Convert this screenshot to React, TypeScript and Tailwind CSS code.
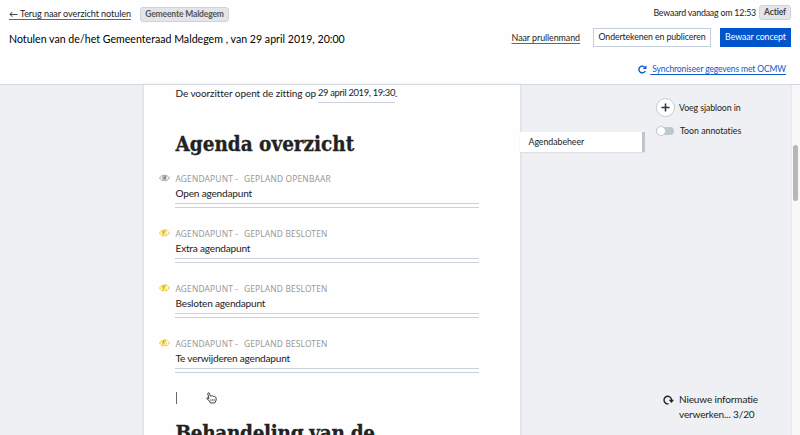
function EyeIcon() {
  return (
    <svg viewBox="0 0 20 14" className="h-[8px] w-[11px] shrink-0">
      <path d="M1 7C5 .5 15 .5 19 7C15 13.5 5 13.5 1 7Z" fill="none" stroke="#909090" strokeWidth="1.5" />
      <circle cx="10" cy="6.4" r="4" fill="#909090" />
      <path d="M8 6Q8.2 4 10 4" fill="none" stroke="#fff" strokeWidth="1" />
    </svg>
  );
}

function EyeSlashIcon() {
  return (
    <svg viewBox="0 0 20 14" className="h-[8px] w-[11px] shrink-0">
      <path d="M7 12C4.500 11 3 10 1 7C4 2.200 9 .8 13 2" fill="none" stroke="#edc60c" strokeWidth="1.800" />
      <path d="M15 3.200Q17.500 4.500 19 7C17 10.300 14 12 10 12.200" fill="none" stroke="#edc60c" strokeWidth="1.800" />
      <path d="M6 4Q8 1.500 11.500 2.200L7 11Q4.500 8 6 4Z" fill="#e3b900" />
      <path d="M14.300 5Q15 9 10.500 10.700Z" fill="#e3b900" />
      <path d="M13.500 .5L6.800 13.500" stroke="#e3b900" strokeWidth="1.500" />
    </svg>
  );
}

function HandCursor() {
  return (
    <svg viewBox="0 0 20 22" className="ml-[29px] h-[12px] w-[11px]">
      <path
        d="M5.500 12L3.200 3.500Q3 1.500 4.500 1.300Q6 1.200 6.500 3L8 7.500Q9 6 10.500 7.500Q12 6.200 13.500 8Q15 7 16.500 9Q18.500 9 18.500 11.500V15L16 20H8L6 16L1.500 12.500Q1 10 3 10.500Z"
        fill="#fff"
        stroke="#303030"
        strokeWidth="1.700"
        strokeLinejoin="round"
      />
      <path d="M9 13V16.500M12 13V16.500M15 13V16.500" stroke="#444" strokeWidth="1.300" />
    </svg>
  );
}

const items = [
  { open: true, title: "Open agendapunt" },
  { open: false, title: "Extra agendapunt" },
  { open: false, title: "Besloten agendapunt" },
  { open: false, title: "Te verwijderen agendapunt" },
];

function AgendaItem({ open, title }: { open: boolean; title: string }) {
  return (
    <div className="h-[55px]">
      <div className="-ml-[16px] flex h-[14px] items-center font-['Noto_Sans',sans-serif] text-[8.4px] text-[#999]">
        <span className="mr-[5px] flex pb-[2px]">{open ? <EyeIcon /> : <EyeSlashIcon />}</span>
        <span className="w-[69px] pl-[0.5px] tracking-[0.17px]">AGENDAPUNT -</span>
        <span className={open ? "tracking-[0.17px]" : "tracking-[0.15px]"}>{open ? "GEPLAND OPENBAAR" : "GEPLAND BESLOTEN"}</span>
      </div>
      <div className="h-[17px] pl-[0.5px] text-[10.1px] leading-[14px] tracking-[-0.2px]">{title}</div>
      <div className="h-[5px] w-[304px] border-y border-[#cbd2da]" />
    </div>
  );
}

export default function App() {
  return (
    <div className="flex h-[435px] w-[800px] flex-col overflow-hidden whitespace-nowrap bg-white font-['Lato','Noto_Sans',sans-serif] text-[#222] [font-variant-ligatures:none]">
      <header className="flex h-[85px] shrink-0 justify-between border-b border-[#d3d8df] bg-[#fefeff] pl-[9px] pr-[9px]">
        <div className="pt-[7px]">
          <div className="flex h-[15px] items-center">
            <a className="w-[131px] pb-[2px] text-[9.1px] tracking-[-0.09px] underline decoration-[#666] underline-offset-[2px]">← Terug naar overzicht notulen</a>
            <span className="flex h-[15px] w-[89px] items-center justify-center rounded-[3px] border border-[#cfd3d8] bg-[#e4e5e9] text-[8.5px] font-bold tracking-[-0.15px] text-[#555]">
              Gemeente Maldegem
            </span>
          </div>
          <h1 className="mt-[10px] text-[10.6px] leading-[15px] tracking-[0.01px] text-black">
            Notulen van de/het Gemeenteraad Maldegem , van 29 april 2019, 20:00
          </h1>
        </div>
        <div className="flex flex-col items-end pt-[5px]">
          <div className="flex h-[15px] items-center gap-[3px]">
            <span className="text-[8.8px] tracking-[-0.19px]">Bewaard vandaag om 12:53</span>
            <span className="flex h-[15px] w-[32px] items-center justify-center rounded-[3px] border border-[#cfd3d8] bg-[#e4e5e9] text-[8.5px] font-bold tracking-[-0.15px] text-[#444]">
              Actief
            </span>
          </div>
          <div className="mt-[8px] flex h-[19px] items-center">
            <a className="mr-[13px] text-[8.9px] tracking-[-0.06px] underline decoration-[#666] underline-offset-[2px]">Naar prullenmand</a>
            <button className="mr-[9px] h-[19px] w-[118px] border border-[#c5cedd] bg-white text-[8.8px] leading-none tracking-[-0.12px]">
              Ondertekenen en publiceren
            </button>
            <button className="h-[19px] w-[71px] bg-[#0055cc] text-[8.8px] leading-none tracking-[-0.08px] text-white">Bewaar concept</button>
          </div>
          <div className="mr-[5px] mt-[15px] flex h-[14px] items-center text-[#0a5ccb]">
            <svg viewBox="0 0 16 16" className="mr-[3px] h-[9px] w-[9px]">
              <path d="M13 10.500A6 6 0 1 1 11.500 3.500" fill="none" stroke="#0055cc" strokeWidth="2.400" />
              <path d="M15 .5V7H8.500Z" fill="#0055cc" />
            </svg>
            <a className="whitespace-pre text-[8.5px] tracking-[-0.12px] underline underline-offset-[2px]"> Synchroniseer gegevens met OCMW</a>
          </div>
        </div>
      </header>

      <main className="flex h-[350px] bg-[#eef0f3]">
        <article className="ml-[144px] h-[350px] w-[376px] overflow-hidden bg-[#fefefe] pl-[31px] shadow-[0_0_2px_1px_#d8dce2]">
          <p className="flex h-[18px] pl-[0.5px] text-[10px] leading-[16px]">
            <span className="w-[142.5px] tracking-[-0.08px]">De voorzitter opent de zitting op</span>
            <span className="w-[77px] border-b border-[#cbd2da] text-[9.4px] leading-[16.500px] tracking-[-0.34px]">29 april 2019, 19:30</span>
            <span>.</span>
          </p>
          <h2 className="mt-[26px] h-[43px] pl-[0.5px] font-['DejaVu_Serif_Condensed','DejaVu_Serif',serif] text-[20.5px] font-bold leading-[30px] [-webkit-text-stroke:0.3px_#222]">Agenda overzicht</h2>
          {items.map((item) => (
            <AgendaItem key={item.title} {...item} />
          ))}
          <div className="flex h-[26px] items-start pl-[0.5px]">
            <div className="h-[12px] w-px bg-[#666]" />
            <HandCursor />
          </div>
          <h2 className="pl-[0.5px] font-['DejaVu_Serif_Condensed','DejaVu_Serif',serif] text-[20.5px] font-bold leading-[30px] tracking-[-0.3px] [-webkit-text-stroke:0.3px_#222]">Behandeling van de</h2>
        </article>

        <div className="w-[125px] pt-[47px]">
          <div className="flex h-[20px] items-center border-r-[3px] border-[#bbc5ce] bg-white pl-[8.5px] text-[8.8px] tracking-[-0.05px] shadow-[0_1px_1px_#dde1e6]">Agendabeheer</div>
        </div>

        <aside className="flex w-[146px] flex-col pl-[11px] pt-[13px]">
          <div className="flex items-center gap-[4px] text-[8.8px] tracking-[-0.11px]">
            <span className="flex h-[19px] w-[19px] items-center justify-center rounded-full border border-[#c5ced6] bg-white">
              <svg viewBox="0 0 10 10" className="h-[9px] w-[9px]">
                <path d="M5 .5V9.500M.5 5H9.500" stroke="#333" strokeWidth="1.700" />
              </svg>
            </span>
            Voeg sjabloon in
          </div>
          <div className="mt-[8px] flex h-[12px] items-center gap-[6px] text-[8.8px] tracking-[-0.02px]">
            <span className="flex h-[8px] w-[18px] items-center rounded-full bg-[#bdc8d0]">
              <span className="h-[10px] w-[10px] shrink-0 rounded-full border border-[#c2ccd5] bg-white" />
            </span>
            Toon annotaties
          </div>
          <div className="mb-[13px] mt-auto flex pl-[7px] text-[10px] leading-[15px] tracking-[-0.14px]">
            <svg viewBox="0 0 22 20" className="mr-[5px] mt-[3px] h-[10px] w-[11px]">
              <path d="M11 17.500A7.500 7.500 0 1 1 17 11" fill="none" stroke="#222" strokeWidth="2.800" />
              <path d="M11.500 9.500H22L17 16Z" fill="#222" />
            </svg>
            <span>
              Nieuwe informatie
              <br />
              verwerken... 3/20
            </span>
          </div>
        </aside>

        <div className="w-[9px] border-l border-[#e6e8ea] bg-[#f8f8f9] pl-px pt-[60px]">
          <div className="h-[56px] w-[5px] rounded-full bg-[#b7b7b8]" />
        </div>
      </main>
    </div>
  );
}
